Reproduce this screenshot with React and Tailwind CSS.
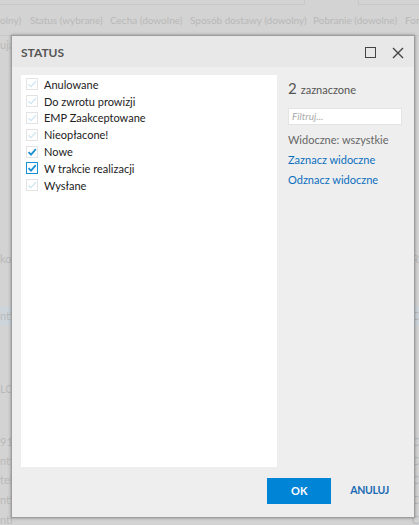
import React from "react";

const font = { fontFamily: "Lato, 'Noto Sans', sans-serif" };

function Check({ state }) {
  const box = state === "focused" ? "border-[#1a8fd8]" : "border-[#e3e3e3]";
  const stroke = state === "faint" ? "#cfe6f4" : "#1b8fd6";
  return (
    <span className={`flex h-[12px] w-[12px] shrink-0 items-center justify-center border ${box} bg-white`}>
      <svg width="10" height="10" viewBox="0 0 10 10">
        <path d="M1.5 5.2 L4 7.6 L8.8 2.2" fill="none" stroke={stroke} strokeWidth={state === "faint" ? 1.3 : 1.8} />
      </svg>
    </span>
  );
}

const items = [
  ["Anulowane", "faint"],
  ["Do zwrotu prowizji", "faint"],
  ["EMP Zaakceptowane", "faint"],
  ["Nieopłacone!", "faint"],
  ["Nowe", "checked"],
  ["W trakcie realizacji", "focused"],
  ["Wysłane", "faint"],
];

function BgRow({ h, left, right, tint }) {
  return (
    <div className={`flex items-center justify-between text-[11px] text-[#b9b9b9] ${tint ? "bg-[#cdd5da]" : ""}`} style={{ height: h }}>
      <span>{left}</span>
      <span>{right}</span>
    </div>
  );
}

export default function App() {
  return (
    <div className="relative h-[525px] w-[419px] overflow-hidden bg-[#d3d3d3]" style={font}>
      {/* background page (dimmed) */}
      <div className="flex flex-col">
        <div className="flex h-[5px]">
          <div className="w-[305px] border-b border-r border-[#c8c8c8]" />
          <div className="w-[53px]" />
          <div className="flex-1 border-b border-l border-[#c8c8c8]" />
        </div>
        <div className="flex h-[30px] items-center whitespace-nowrap text-[10px] text-[#b8b8b8]">
          <span className="w-[30px] shrink-0">olny)</span>
          <span className="w-[80px] shrink-0">Status (wybrane)</span>
          <span className="w-[80px] shrink-0">Cecha (dowolne)</span>
          <span className="w-[123px] shrink-0">Sposób dostawy (dowolny)</span>
          <span className="w-[92px] shrink-0">Pobranie (dowolne)</span>
          <span className="shrink-0">For</span>
        </div>
        <div className="h-[1px] bg-[#c9c9c9]" />
        <BgRow h={18} left="ują" right="" />
        <div style={{ height: 195 }} />
        <BgRow h={20} left="kor" right="R" />
        <div style={{ height: 37 }} />
        <BgRow h={20} left="ntī" right="C" tint />
        <div style={{ height: 53 }} />
        <BgRow h={20} left="LO" right="" />
        <div style={{ height: 33 }} />
        <BgRow h={20} left="913" right="C" />
        <BgRow h={19} left="ntī" right="C" />
        <BgRow h={19} left="tek" right="C" />
        <BgRow h={20} left="ntī" right="C" />
        <BgRow h={20} left="ntī" right="C" />
        <div className="flex h-[14px] items-center gap-[40px] pl-[4px] text-[11px] text-[#b9b9b9]">
          <span>zyt1407</span>
          <span>zintowanadi</span>
          <span>0.00</span>
          <span>61.20</span>
          <span>22 Allegro Automat</span>
        </div>
      </div>

      {/* dialog */}
      <div className="absolute left-[11px] top-[35px] flex h-[483px] w-[404px] flex-col border border-[#9e9e9e] bg-[#eeeeee] shadow-[0_0_3px_rgba(0,0,0,0.35)]">
        <div className="flex h-[31px] shrink-0 items-center justify-between bg-[#e8e8e8] pl-[9px] pr-[10px] pt-[2px]">
          <span className="text-[12px] font-bold text-[#555555]">STATUS</span>
          <div className="flex items-center gap-[16px]">
            <span className="h-[11px] w-[11px] border-[1.5px] border-[#444]" />
            <svg width="12" height="12" viewBox="0 0 12 12">
              <path d="M1 1 L11 11 M11 1 L1 11" stroke="#444" strokeWidth="1.4" />
            </svg>
          </div>
        </div>
        <div className="flex flex-1 pl-[9px] pt-[8px]">
          <div className="flex h-[392px] w-[256px] flex-col bg-white pt-[1px]">
            {items.map(([label, st]) => (
              <div key={label} className="flex h-[16.8px] items-center gap-[6px] pl-[5px]">
                <Check state={st} />
                <span className="text-[11px] leading-none text-[#222]">{label}</span>
              </div>
            ))}
          </div>
          <div className="ml-[11px] flex w-[114px] flex-col">
            <div className="mt-[6px] flex items-baseline gap-[4px] text-[#555]">
              <span className="text-[15px] leading-none">2</span>
              <span className="text-[11px] leading-none">zaznaczone</span>
            </div>
            <div className="mt-[12px] flex h-[17px] items-center border border-[#e4e4e4] bg-white pl-[3px] text-[10px] italic text-[#aaaaaa]">
              Filtruj...
            </div>
            <span className="mt-[8px] text-[11px] leading-[14px] text-[#666]">Widoczne: wszystkie</span>
            <span className="mt-[6px] text-[11px] leading-[14px] text-[#0b6fbf]">Zaznacz widoczne</span>
            <span className="mt-[6px] text-[11px] leading-[14px] text-[#0b6fbf]">Odznacz widoczne</span>
          </div>
        </div>
        <div className="flex h-[50px] shrink-0 items-start justify-end pr-[25px] pt-[11px]">
          <div className="flex h-[26px] w-[64px] items-center justify-center bg-[#0084d6] text-[11px] font-bold text-white">
            OK
          </div>
          <div className="ml-[19px] flex h-[26px] items-center text-[10.5px] font-bold tracking-[-0.3px] text-[#1a6bb3]">ANULUJ</div>
        </div>
      </div>
    </div>
  );
}
